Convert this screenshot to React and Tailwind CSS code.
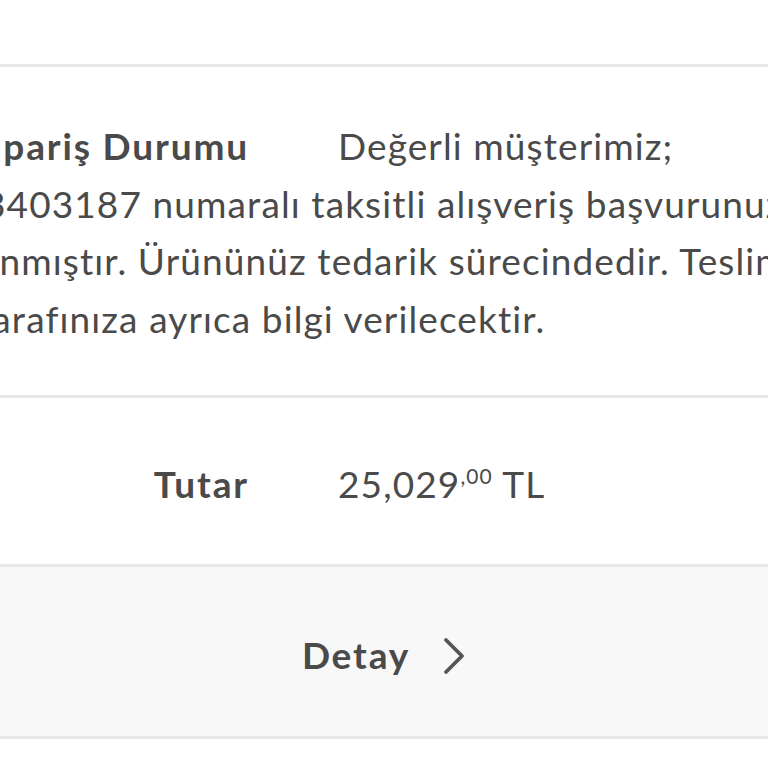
export default function App() {
  const font = { fontFamily: '"Lato", "Liberation Sans", sans-serif' };

  return (
    <div className="w-[768px] h-[768px] overflow-hidden bg-white text-[#4a4a4a]" style={font}>
      {/* top strip */}
      <div className="h-[64px] bg-white" />
      <div className="h-[3px] bg-[#e8e8e8]" />

      {/* order status */}
      <div className="pt-[50px] pb-[48px] text-[37px] leading-[57.5px] tracking-[0.03em]">
        <div className="flex whitespace-nowrap">
          <div className="w-[249px] shrink-0 flex justify-end">
            <span className="font-bold tracking-[0.05em]">Sipariş Durumu</span>
          </div>
          <span className="ml-[89px]">Değerli müşterimiz;</span>
        </div>
        <div className="whitespace-nowrap ml-[-16px]">3403187 numaralı taksitli alışveriş başvurunuz</div>
        <div className="whitespace-nowrap ml-[-20px]">anmıştır. Ürününüz tedarik sürecindedir. Teslim</div>
        <div className="whitespace-nowrap ml-[-22px]">tarafınıza ayrıca bilgi verilecektir.</div>
      </div>
      <div className="h-[3px] bg-[#e8e8e8]" />

      {/* amount */}
      <div className="h-[166px] pt-[6px] flex items-center text-[37px] whitespace-nowrap tracking-[0.03em]">
        <div className="w-[249px] shrink-0 flex justify-end">
          <span className="font-bold tracking-[0.05em]">Tutar</span>
        </div>
        <span className="ml-[89px]">
          25,029<span className="relative -top-[14px] text-[21px]">,00</span> TL
        </span>
      </div>
      <div className="h-[3px] bg-[#e8e8e8]" />

      {/* detail button */}
      <div className="h-[169px] pt-[6px] bg-[#f8f8f8] flex items-center justify-center gap-[32px]">
        <span className="text-[37px] font-bold tracking-[0.05em]">Detay</span>
        <svg width="24" height="38" viewBox="0 0 24 38" fill="none" className="mt-[2px]">
          <path d="M4 3 L20 19 L4 35" stroke="#555" strokeWidth="3.8" strokeLinecap="round" strokeLinejoin="round" />
        </svg>
      </div>
      <div className="h-[3px] bg-[#e8e8e8]" />
    </div>
  );
}
